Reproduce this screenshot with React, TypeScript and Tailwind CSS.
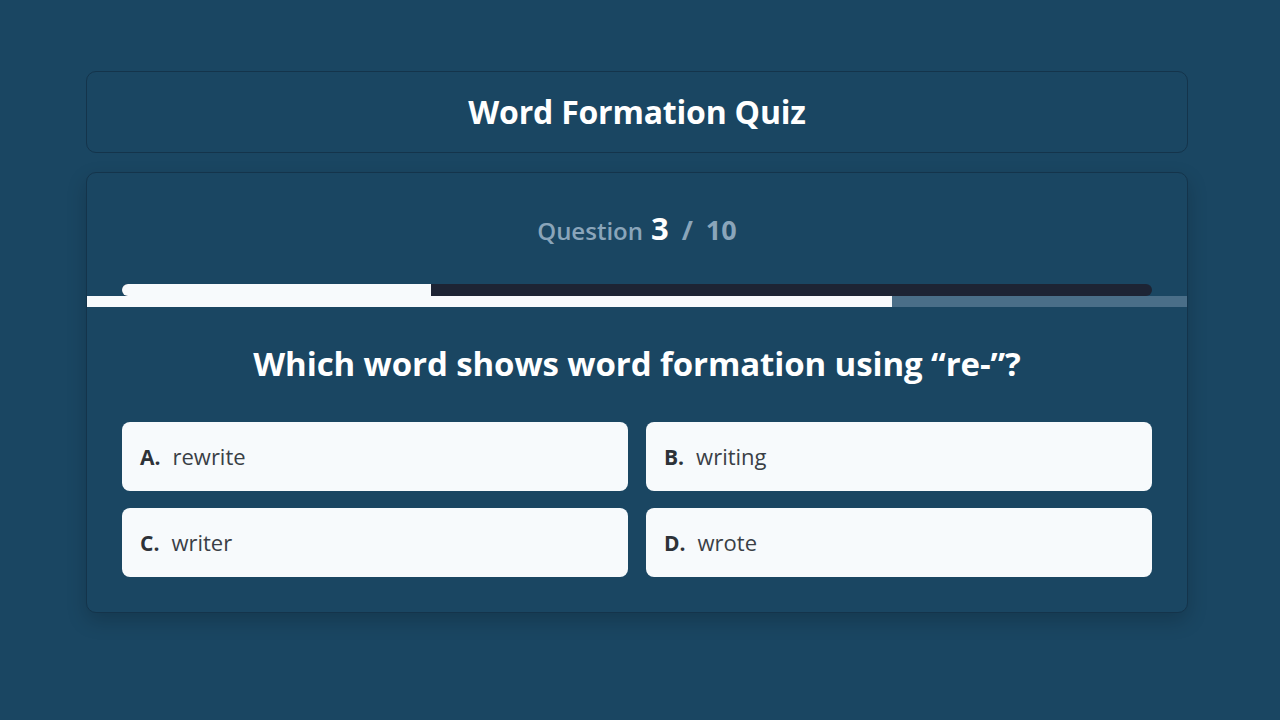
import React from "react";

const options = [
  { letter: "A.", text: "rewrite" },
  { letter: "B.", text: "writing" },
  { letter: "C.", text: "writer" },
  { letter: "D.", text: "wrote" },
];

const App = () => {
  return (
    <div
      className="min-h-[720px] w-full bg-[#1a4662] pt-[71px]"
      style={{ fontFamily: "'Open Sans', Lato, sans-serif" }}
    >
      <div className="ml-[86px] flex w-[1102px] flex-col gap-[19px]">
        <div className="flex h-[82px] items-center justify-center rounded-[10px] border border-[#14344b] bg-[#1a4662]">
          <h1 className="text-[32px] font-bold tracking-[-0.2px] text-white">
            Word Formation Quiz
          </h1>
        </div>

        <div className="rounded-[10px] border border-[#14344b] bg-[#1a4662] pb-[35px] shadow-[0_8px_20px_rgba(0,0,0,0.18)]">
          <div className="flex h-[111px] items-baseline justify-center pt-[32px]">
            <span className="text-[24px] font-semibold text-[#8aa5ba]">Question</span>
            <span className="ml-[8px] text-[31px] font-bold text-white">3</span>
            <span className="ml-[13px] text-[27px] font-bold text-[#8aa5ba]">/</span>
            <span className="ml-[13px] text-[27px] font-bold text-[#8aa5ba]">10</span>
          </div>

          <div className="px-[35px]">
            <div className="h-[12px] w-full rounded-full bg-[#1d2434]">
              <div className="h-full w-[30%] rounded-l-full bg-[#f7fafc]" />
            </div>
          </div>
          <div className="h-[11px] w-full bg-[#4a6e88]">
            <div className="h-full w-[73.2%] bg-[#f7fafc]" />
          </div>

          <h2 className="mt-[35px] text-center text-[33px] font-bold leading-[44px] tracking-[-0.1px] text-white">
            Which word shows word formation using “re-”?
          </h2>

          <div className="mt-[36px] grid grid-cols-2 gap-x-[18px] gap-y-[17px] px-[35px]">
            {options.map((o) => (
              <div
                key={o.letter}
                className="flex h-[69px] items-center rounded-[8px] bg-[#f7fafc] px-[18px]"
              >
                <span className="flex items-baseline">
                  <span className="text-[21px] font-bold text-[#2d3238]">{o.letter}</span>
                  <span className="ml-[12px] text-[22px] text-[#3a3f46]">{o.text}</span>
                </span>
              </div>
            ))}
          </div>
        </div>
      </div>
    </div>
  );
};

export default App;
